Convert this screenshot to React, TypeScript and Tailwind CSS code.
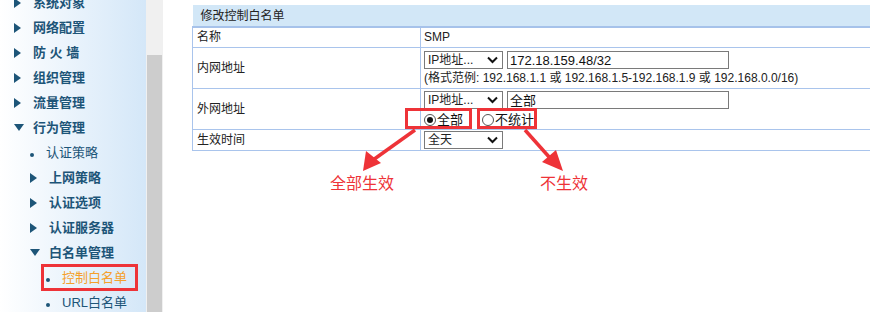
import React from 'react';

const cjk = { fontFamily: '"Liberation Sans", "Noto Sans CJK SC", sans-serif' };

type NavItem = { label: string; level: 0 | 1 | 2; kind: 'closed' | 'open' | 'dot'; active?: boolean };

const nav: NavItem[] = [
  { label: '系统对象', level: 0, kind: 'closed' },
  { label: '网络配置', level: 0, kind: 'closed' },
  { label: '防 火 墙', level: 0, kind: 'closed' },
  { label: '组织管理', level: 0, kind: 'closed' },
  { label: '流量管理', level: 0, kind: 'closed' },
  { label: '行为管理', level: 0, kind: 'open' },
  { label: '认证策略', level: 1, kind: 'dot' },
  { label: '上网策略', level: 1, kind: 'closed' },
  { label: '认证选项', level: 1, kind: 'closed' },
  { label: '认证服务器', level: 1, kind: 'closed' },
  { label: '白名单管理', level: 1, kind: 'open' },
  { label: '控制白名单', level: 2, kind: 'dot', active: true },
  { label: 'URL白名单', level: 2, kind: 'dot' },
];

function Marker({ kind }: { kind: NavItem['kind'] }) {
  if (kind === 'closed')
    return (
      <svg width="7" height="10" viewBox="0 0 7 10" className="shrink-0">
        <path d="M0 0 L7 5 L0 10 Z" fill="#1d5578" />
      </svg>
    );
  if (kind === 'open')
    return (
      <svg width="10" height="7" viewBox="0 0 10 7" className="shrink-0">
        <path d="M0 0 L10 0 L5 7 Z" fill="#1d5578" />
      </svg>
    );
  return <span className="block w-[4px] h-[4px] rounded-full bg-[#1d5578] shrink-0 mt-[4px]" />;
}

function Sidebar() {
  return (
    <div className="w-[146px] h-full bg-gradient-to-r from-white to-[#d4e7f8] overflow-hidden">
      <div className="-mt-[10px]">
        {nav.map((n) => {
          const pad = n.level === 0 ? 'pl-[14px]' : n.level === 1 ? 'pl-[30px]' : 'pl-[46px]';
          const gap = n.kind === 'open' ? 'gap-[9px]' : 'gap-[12px]';
          const text = n.active
            ? 'text-[#f5a02c] font-normal'
            : n.kind === 'dot'
              ? 'text-[#1d5578] font-normal'
              : 'text-[#1d5578] font-bold';
          return (
            <div key={n.label} className={`relative h-[25px] flex items-center ${pad} ${gap}`}>
              <Marker kind={n.kind} />
              <span className={`text-[13px] leading-none ${text}`} style={cjk}>
                {n.label}
              </span>
              {n.active && (
                <span className="absolute left-[41px] top-[-1px] w-[97px] h-[27px] border-[3px] border-[#ee3338]" />
              )}
            </div>
          );
        })}
      </div>
    </div>
  );
}

function Scrollbar() {
  return (
    <div className="w-[17px] h-full bg-[#f0f0f0] flex flex-col px-[1px]">
      <div className="h-[55px]" />
      <div className="flex-1 bg-[#cdcdcd]" />
    </div>
  );
}

function FakeSelect({ value }: { value: string }) {
  return (
    <div className="w-[79px] h-[18px] border border-[#7a7a7a] bg-white flex items-center justify-between pl-[3px] pr-[4px] text-[12px] text-[#222]" style={cjk}>
      <span className="leading-none">{value}</span>
      <svg width="11" height="8" viewBox="0 0 11 8">
        <path d="M1 1.5 L5.5 6 L10 1.5" stroke="#111" strokeWidth="2" fill="none" />
      </svg>
    </div>
  );
}

function FakeInput({ value }: { value: string }) {
  return (
    <div className="w-[222px] h-[18px] border border-[#7a7a7a] bg-white flex items-center pl-[2px] text-[13px] text-[#111]" style={cjk}>
      <span className="leading-none">{value}</span>
    </div>
  );
}

function Radio({ checked, label }: { checked?: boolean; label: string }) {
  return (
    <label className="flex items-center gap-[1px] text-[13px] text-[#111]" style={cjk}>
      <span className="w-[12px] h-[12px] rounded-full border border-[#555] bg-white flex items-center justify-center">
        {checked && <span className="w-[6px] h-[6px] rounded-full bg-[#111]" />}
      </span>
      <span className="leading-none">{label}</span>
    </label>
  );
}

const labelCell = 'border border-[#a9c4ec] pl-[4px] text-[12px] text-[#222] align-middle w-[228px]';
const valueCell = 'border border-[#a9c4ec] pl-[3px] text-[12px] text-[#222] align-middle';

function Annotations() {
  return (
    <>
      <span className="absolute left-[242px] top-[108px] w-[67px] h-[21px] border-[3px] border-[#ee3338]" />
      <span className="absolute left-[314px] top-[108px] w-[60px] h-[21px] border-[3px] border-[#ee3338]" />
      <svg className="absolute left-[190px] top-[127px]" width="240" height="50" viewBox="0 0 240 50">
        <path d="M62 3 L20 33" stroke="#ee3338" strokeWidth="3.5" />
        <path d="M10 44 L13 24 L28 36 Z" fill="#ee3338" />
        <path d="M172 3 L197 31" stroke="#ee3338" strokeWidth="3.5" />
        <path d="M210 44 L189 35 L203 23 Z" fill="#ee3338" />
      </svg>
      <span className="absolute left-[167px] top-[176px] text-[16px] text-[#ee3338] leading-none" style={cjk}>
        全部生效
      </span>
      <span className="absolute left-[377px] top-[176px] text-[16px] text-[#ee3338] leading-none" style={cjk}>
        不生效
      </span>
    </>
  );
}

export default function App() {
  return (
    <div className="w-[870px] h-[312px] flex bg-white overflow-hidden" style={cjk}>
      <Sidebar />
      <Scrollbar />
      <div className="flex-1 relative pl-[29px] pt-[5px] overflow-hidden">
        <table className="border-collapse w-[700px]">
          <tbody>
            <tr>
              <td colSpan={2} className="h-[22px] bg-[#d2e7f7] border-b-2 border-[#a6c2ea] pl-[8px] text-[12px] text-[#222]">
                修改控制白名单
              </td>
            </tr>
            <tr className="h-[20px]">
              <td className={labelCell}>名称</td>
              <td className={valueCell}>SMP</td>
            </tr>
            <tr className="h-[41px]">
              <td className={labelCell}>内网地址</td>
              <td className={valueCell}>
                <div className="flex flex-col gap-[3px] py-[1px]">
                  <div className="flex items-center gap-[4px]">
                    <FakeSelect value="IP地址..." />
                    <FakeInput value="172.18.159.48/32" />
                  </div>
                  <div className="leading-none">(格式范例: 192.168.1.1 或 192.168.1.5-192.168.1.9 或 192.168.0.0/16)</div>
                </div>
              </td>
            </tr>
            <tr className="h-[41px]">
              <td className={labelCell}>外网地址</td>
              <td className={valueCell}>
                <div className="flex flex-col gap-[4px] py-[1px]">
                  <div className="flex items-center gap-[4px]">
                    <FakeSelect value="IP地址..." />
                    <FakeInput value="全部" />
                  </div>
                  <div className="flex items-center gap-[19px]">
                    <Radio checked label="全部" />
                    <Radio label="不统计" />
                  </div>
                </div>
              </td>
            </tr>
            <tr className="h-[21px]">
              <td className={labelCell}>生效时间</td>
              <td className={valueCell}>
                <FakeSelect value="全天" />
              </td>
            </tr>
          </tbody>
        </table>
        <Annotations />
      </div>
    </div>
  );
}
